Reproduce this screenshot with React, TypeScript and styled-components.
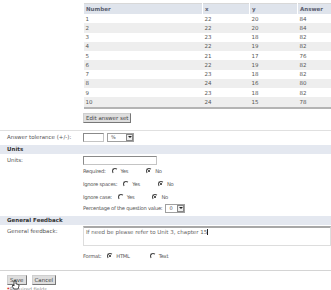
import React from 'react';
import styled, {createGlobalStyle} from 'styled-components';

const GlobalStyle = createGlobalStyle`
    body {
        margin: 0;
        background: #ffffff;
        font-family: "DejaVu Sans", Verdana, sans-serif;
        font-size: 5.5px;
        color: #555555;
    }
`;

const Page = styled.div`
    width: 331px;
    height: 290px;
    overflow: hidden;
`;

const TableArea = styled.div`
    padding: 3px 0 0 83px;
`;

const DataTable = styled.table`
    width: 248px;
    border-collapse: collapse;
    table-layout: fixed;
    border-top: 1px solid #d8d8d8;
    border-bottom: 2px solid #b4b4b4;
`;

const HeadCell = styled.th<{$width: number}>`
    width: ${p => p.$width}px;
    height: 10px;
    padding: 0 2px;
    text-align: left;
    font-weight: bold;
    color: #5a6070;
    background: #dfe4ec;
    border-left: 1px solid #ffffff;
`;

const BodyRow = styled.tr<{$shaded: boolean}>`
    background: ${p => (p.$shaded ? '#eeeeee' : '#ffffff')};
`;

const Cell = styled.td`
    height: 9.25px;
    padding: 0 2px;
    color: #555555;
`;

const EditBar = styled.div`
    padding: 4px 0 0 83px;
`;

const GrayButton = styled.button`
    font-family: inherit;
    font-size: 5.5px;
    color: #444444;
    background: #dedede;
    border: 1px solid #cfcfcf;
    border-right-color: #777777;
    border-bottom-color: #777777;
    height: 10px;
    padding: 0 2px;
    line-height: 8px;
`;

const Divider = styled.div`
    height: 1px;
    background: #e0e0e0;
    margin-top: 7px;
`;

const Row = styled.div<{$top?: number}>`
    display: grid;
    grid-template-columns: 83px 1fr;
    align-items: center;
    margin-top: ${p => p.$top ?? 0}px;
`;

const Label = styled.div<{$top?: boolean}>`
    padding-left: 7px;
    align-self: ${p => (p.$top ? 'start' : 'center')};
    padding-top: ${p => (p.$top ? 2 : 0)}px;
`;

const Field = styled.div`
    display: flex;
    align-items: center;
    gap: 3px;
`;

const TextBox = styled.div<{$width: number}>`
    width: ${p => p.$width}px;
    height: 9px;
    box-sizing: border-box;
    border: 1px solid #c4c4c4;
    border-top-color: #8a8a8a;
    border-left-color: #8a8a8a;
    background: #ffffff;
`;

const Select = styled.div<{$width: number}>`
    width: ${p => p.$width}px;
    height: 9px;
    box-sizing: border-box;
    border: 1px solid #a0a0a0;
    display: flex;
    align-items: center;
    justify-content: space-between;
    padding-left: 3px;
    font-size: 5px;
    letter-spacing: 0;
    background: #ffffff;
`;

const SelectArrow = styled.span`
    width: 7px;
    height: 7px;
    box-sizing: border-box;
    border: 1px solid #888888;
    background: #eeeeee;
    display: flex;
    align-items: center;
    justify-content: center;
    &::after {
        content: '';
        border-left: 2px solid transparent;
        border-right: 2px solid transparent;
        border-top: 2px solid #222222;
    }
`;

const Section = styled.div<{$top: number}>`
    margin-top: ${p => p.$top}px;
    height: 9px;
    line-height: 9px;
    padding-left: 7px;
    background: #e4e8f0;
    font-weight: bold;
    color: #333333;
`;

const OptionLine = styled.div<{$height: number}>`
    padding-left: 83px;
    height: ${p => p.$height}px;
    display: flex;
    align-items: center;
    gap: 3px;
    font-size: 5.2px;
    letter-spacing: -0.25px;
`;

const Choice = styled.span<{$after?: number}>`
    display: inline-flex;
    align-items: center;
    gap: 3px;
    margin-left: 3px;
    margin-right: ${p => p.$after ?? 0}px;
`;

const Radio = styled.span<{$on?: boolean}>`
    width: 4px;
    height: 4px;
    border-radius: 50%;
    border: 1px solid transparent;
    border-top-color: #444444;
    border-left-color: #444444;
    display: inline-flex;
    align-items: center;
    justify-content: center;
    &::after {
        content: '';
        width: 2px;
        height: 2px;
        border-radius: 50%;
        background: ${p => (p.$on ? '#222222' : 'transparent')};
    }
`;

const Feedback = styled.div`
    width: 248px;
    height: 20px;
    box-sizing: border-box;
    border: 1px solid #dddddd;
    border-top: 2px solid #a8a8a8;
    padding: 1px 2px;
    color: #666666;
`;

const Caret = styled.span`
    border-left: 1px solid #222222;
`;

const Footer = styled.div`
    margin-top: 4px;
    border-top: 1px solid #d4d4d4;
    padding: 4px 0 0 7px;
    display: flex;
    gap: 5px;
    position: relative;
`;

const Pointer = styled.svg`
    position: absolute;
    left: 11px;
    top: 9px;
`;

const RequiredNote = styled.div`
    padding: 1px 0 0 7px;
    color: #888888;
    font-size: 5px;
    line-height: 6px;
    & b {
        color: #cc0000;
    }
`;

const rows = [
    [1, 22, 20, 84],
    [2, 22, 20, 84],
    [3, 23, 18, 82],
    [4, 22, 19, 82],
    [5, 21, 17, 76],
    [6, 22, 19, 82],
    [7, 23, 18, 82],
    [8, 24, 16, 80],
    [9, 23, 18, 82],
    [10, 24, 15, 78],
];

const Options = ({label, first, second, firstOn, gap}: {label: string; first: string; second: string; firstOn?: boolean; gap?: number}) => (
    <>
        <span>{label}</span>
        <Choice $after={gap}>
            <Radio $on={firstOn} />
            <span>{first}</span>
        </Choice>
        <Choice>
            <Radio $on={!firstOn} />
            <span>{second}</span>
        </Choice>
    </>
);

export default function App() {
    return (
        <Page>
            <GlobalStyle />
            <TableArea>
                <DataTable>
                    <thead>
                        <tr>
                            <HeadCell $width={114}>Number</HeadCell>
                            <HeadCell $width={42}>x</HeadCell>
                            <HeadCell $width={43}>y</HeadCell>
                            <HeadCell $width={49}>Answer</HeadCell>
                        </tr>
                    </thead>
                    <tbody>
                        {rows.map((r, i) => (
                            <BodyRow key={r[0]} $shaded={i % 2 === 1}>
                                {r.map((v, j) => (
                                    <Cell key={j}>{v}</Cell>
                                ))}
                            </BodyRow>
                        ))}
                    </tbody>
                </DataTable>
            </TableArea>
            <EditBar>
                <GrayButton>Edit answer set</GrayButton>
            </EditBar>
            <Divider />
            <Row $top={2}>
                <Label>Answer tolerance (+/-):</Label>
                <Field>
                    <TextBox $width={21} />
                    <Select $width={27}>
                        %<SelectArrow />
                    </Select>
                </Field>
            </Row>
            <Section $top={3}>Units</Section>
            <Row $top={2}>
                <Label>Units:</Label>
                <Field>
                    <TextBox $width={74} />
                </Field>
            </Row>
            <OptionLine $height={13}>
                <Options label="Required:" first="Yes" second="No" gap={12} />
            </OptionLine>
            <OptionLine $height={13}>
                <Options label="Ignore spaces:" first="Yes" second="No" gap={12} />
            </OptionLine>
            <OptionLine $height={13}>
                <Options label="Ignore case:" first="Yes" second="No" gap={12} />
            </OptionLine>
            <OptionLine $height={9}>
                <span>Percentage of the question value:</span>
                <Select $width={20}>
                    0<SelectArrow />
                </Select>
            </OptionLine>
            <Section $top={3}>General Feedback</Section>
            <Row $top={1}>
                <Label $top>General feedback:</Label>
                <Feedback>
                    If need be please refer to Unit 3, chapter 15<Caret />
                </Feedback>
            </Row>
            <OptionLine $height={20}>
                <Options label="Format:" first="HTML" second="Text" firstOn gap={14} />
            </OptionLine>
            <Footer>
                <GrayButton>Save</GrayButton>
                <GrayButton>Cancel</GrayButton>
                <Pointer width="9" height="10" viewBox="0 0 9 10">
                    <path
                        d="M3 1v5l-1-1-1 1 2 3h4l1-3V5l-2-1-1 0V1z"
                        fill="#ffffff"
                        stroke="#222222"
                        strokeWidth="0.8"
                    />
                </Pointer>
            </Footer>
            <RequiredNote>
                <b>*</b>Required fields
            </RequiredNote>
        </Page>
    );
}
